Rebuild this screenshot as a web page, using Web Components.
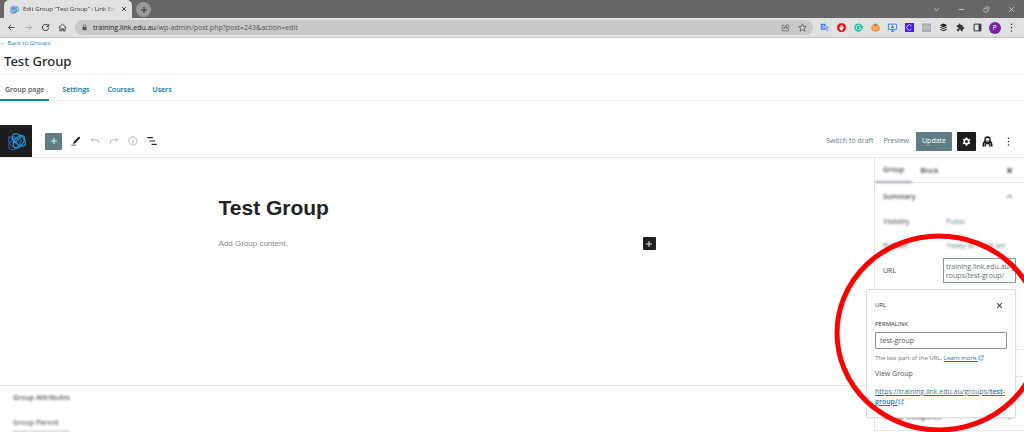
<!DOCTYPE html>
<html lang="en">
<head>
<meta charset="utf-8">
<title>Edit Group "Test Group"</title>
<style>
  body {
    margin: 0;
    background: #fff;
    color: #1e1e1e;
    font: 7px/10px "Open Sans", "Noto Sans", sans-serif;
  }
</style>
</head>
<body>
<group-page></group-page>

<script>
(function () {

  const icons = {
    back: '<path d="M20 12H4m7-7-7 7 7 7" fill="none" stroke="currentColor" stroke-width="2.4"/>',
    forward: '<path d="M4 12h16m-7-7 7 7-7 7" fill="none" stroke="currentColor" stroke-width="2"/>',
    reload: '<path d="M19 7a8.500 8.500 0 1 0 1.500 6M20.500 3v6h-6" fill="none" stroke="currentColor" stroke-width="2.6"/>',
    home: '<path d="M2 12 12 3l10 9M5 10v11h5v-6h4v6h5V10" fill="none" stroke="currentColor" stroke-width="2.4"/>',
    lock: '<path d="M5 10h14v11H5z" fill="currentColor"/><path d="M8 10V6a4 4 0 0 1 8 0v4" fill="none" stroke="currentColor" stroke-width="2.4"/>',
    share: '<path d="M9 6H3v15h17v-5M7 16c1-6 5-8 9-8V3l6 7-6 6v-5c-4 0-7 1-9 5z" fill="none" stroke="currentColor" stroke-width="1.8"/>',
    star: '<path d="m12 2 3 7 7 .6-5.500 4.800L18.500 22 12 18l-6.500 4 2-7.600L2 9.600 9 9z" fill="none" stroke="currentColor" stroke-width="2"/>',
    close: '<path d="m4 4 16 16M20 4 4 20" fill="none" stroke="currentColor" stroke-width="3.6"/>',
    thinclose: '<path d="m4 4 16 16M20 4 4 20" fill="none" stroke="currentColor" stroke-width="2.4"/>',
    plus: '<path d="M12 3v18M3 12h18" fill="none" stroke="currentColor" stroke-width="2.6"/>',
    down: '<path d="m4 8 8 8 8-8" fill="none" stroke="currentColor" stroke-width="2.4"/>',
    up: '<path d="m3 16 9-8 9 8" fill="none" stroke="currentColor" stroke-width="3.4"/>',
    minimize: '<path d="M3 12h18" stroke="currentColor" stroke-width="2.4"/>',
    restore: '<rect x="3" y="8" width="13" height="13" rx="3" fill="none" stroke="currentColor" stroke-width="2"/><path d="M8 5q0-2 3-2h6q4 0 4 4v6q0 3-2 3" fill="none" stroke="currentColor" stroke-width="2"/>',
    dots: '<g fill="currentColor"><circle cx="12" cy="3" r="2"/><circle cx="12" cy="12" r="2"/><circle cx="12" cy="21" r="2"/></g>',
    translate: '<path d="M2 2h12l4 16H4a2 2 0 0 1-2-2z" fill="#3f7de8"/><path d="M12 7h9a2 2 0 0 1 2 2v14h-8z" fill="#b9c9e8"/><path d="M11 8a3.500 3.500 0 1 0 .8 3H9" fill="none" stroke="#fff" stroke-width="1.700"/><path d="M14 12h7m-3.500-2v2m2.500 0c-1 3-3 5-5 6m1-4 5 5" fill="none" stroke="#557ac0" stroke-width="1.400"/>',
    blocker: '<path d="M7 1h10l6 6v10l-6 6H7l-6-6V7z" fill="#e40d0d" stroke="#e40d0d"/><path d="M9 13V8m2.500 5V6M14 13V7m-5 6h5l2-3q1-1 1 0l-1.500 6q-1 3-3.500 3c-3 0-4-2-4-6z" fill="#fff" stroke="#fff" stroke-width="1.800" stroke-linecap="round"/>',
    grammar: '<circle cx="12" cy="12" r="11" fill="#15c39a"/><path d="M16.500 8a6 6 0 1 0 1.500 5h-5m5 0v4" fill="none" stroke="#fff" stroke-width="2.200"/>',
    pineapple: '<path d="m12 8-8-4 5 0 3-4 3 4 5 0z" fill="#4b9b35"/><ellipse cx="12" cy="14" rx="11" ry="8.500" fill="#f57c19"/><path d="M10 10H5v4h5v4H4m9-8v8h2q4 0 4-4t-4-4z" fill="none" stroke="#ffe6b8" stroke-width="1.800"/>',
    screen: '<path d="M1 3h22v14H1z" fill="#dcecff" stroke="#2d7bf0" stroke-width="2.400"/><path d="M8 22h8m-4-5v5" stroke="#2d7bf0" stroke-width="3"/><path d="M8 13a4 4 0 0 1 8 0z" fill="#2d5ed1"/><circle cx="12" cy="8" r="2.500" fill="#e35b4f"/>',
    clip: '<path d="M0 0h24v24H0z" fill="#4a1cf1"/><path d="M17.500 8a7 7 0 1 0 0 8" fill="none" stroke="#d7ccff" stroke-width="2.400"/>',
    code: '<path d="M0 1h24v23H0z" fill="#a9afb8"/><path d="m8 8-4 4 4 4m8-8 4 4-4 4m-2-10-4 12" fill="none" stroke="#e9ecef" stroke-width="1.800"/>',
    buffer: '<g fill="#1b1b1b"><path d="m12 1 10 5-10 5L2 6z"/><path d="m2 11 3-1 7 3 7-3 3 1-10 5z"/><path d="m2 17 3-1 7 3 7-3 3 1-10 5z"/></g>',
    puzzle: '<path d="M20 11h-2V7q0-2-2-2h-4V4a2.500 2.500 0 0 0-5 0v1H4Q2 5 2 7v4h2a2.500 2.500 0 0 1 0 6H2v3q0 2 2 2h4v-2a2.500 2.500 0 0 1 5 0v2h3q2 0 2-2v-4h2a2.500 2.500 0 0 0 0-5z" fill="#333"/>',
    panel: '<path d="M3 3h18v18H3z" fill="none" stroke="#333" stroke-width="2.600"/><path d="M15 3h6v18h-6z" fill="#333"/>',
    knot: '<g fill="none" stroke-width="1.400"><g stroke="#2a5db4"><ellipse cx="9" cy="13" rx="5.500" ry="9" transform="rotate(-42 9 13)"/><ellipse cx="10" cy="15" rx="6" ry="9" transform="rotate(50 10 15)"/><path d="M4 8q8 1 12 13"/></g><g stroke="#18a0dc"><ellipse cx="15" cy="10" rx="5.500" ry="10" transform="rotate(-48 15 10)"/><ellipse cx="15" cy="12" rx="5.500" ry="9" transform="rotate(42 15 12)"/><path d="M7 14Q13 12 18 5"/></g></g>',
    pencil: '<path d="M20 2q4 1 1 4L11 17l-6 2 2-6L17 3q1-1 3-1z" fill="currentColor"/><path d="M1 22h11" stroke="#777" stroke-width="3"/>',
    undo: '<path d="M8 4 3 9l5 5M3 9h12q6 0 6 6v3" fill="none" stroke="currentColor" stroke-width="2"/>',
    redo: '<path d="m16 4 5 5-5 5m5-5H9q-6 0-6 6v3" fill="none" stroke="currentColor" stroke-width="2"/>',
    info: '<circle cx="12" cy="12" r="10" fill="none" stroke="currentColor" stroke-width="2"/><path d="M12 10v8m0-12v2" stroke="currentColor" stroke-width="2"/>',
    list: '<path d="M1 4h13M6 12h13M11 20h12" stroke="currentColor" stroke-width="2.800"/>',
    gear: '<path d="m10 1-.6 3-2.500 1.400L4 4.400l-2 3.400 2.300 2v4.400l-2.300 2 2 3.400 2.900-1L9.400 20l.6 3h4l.6-3 2.500-1.400 2.900 1 2-3.400-2.300-2V9.800l2.300-2-2-3.400-2.900 1L14.600 4 14 1z" fill="currentColor"/><circle cx="12" cy="12" r="4" fill="#1e1e1e"/>',
    astronaut: '<path d="M5 11V8a7 7.500 0 0 1 14 0v3q4 2 4 12H1Q1 13 5 11z" fill="#151515"/><path d="M8 6q4-3 8 0v3q-4 3-8 0z" fill="#fff"/><path d="M9 12q3 2 6 0M6 15v8m12-8v8" stroke="#fff" stroke-width="1.400" fill="none"/><path d="M9 18h6v6H9z" fill="#fff"/>',
    external: '<path d="M11 4H4v16h15v-7M11 14 21 3m-7 0h7v7" fill="none" stroke="currentColor" stroke-width="2.400"/>'
  }

  // attaches an open shadow root filled from a template
  class BaseElement extends HTMLElement {
    constructor () {
      super()
      const template = document.createElement('template')
      template.innerHTML = this.markup()
      this.attachShadow({mode: 'open'})
      this.shadowRoot.appendChild(template.content.cloneNode(true))
    }
  }

  // <ui-icon name="gear"></ui-icon>, size comes from --size
  class UiIcon extends BaseElement {
    markup () {
      return `
        <style>
          :host { display: inline-flex; flex: none; width: var(--size, 9px); height: var(--size, 9px); vertical-align: middle; }
          svg { width: 100%; height: 100%; overflow: visible; }
        </style>
        <svg viewBox="0 0 24 24" aria-hidden="true"></svg>
      `
    }

    connectedCallback () {
      this.shadowRoot.querySelector('svg').innerHTML = icons[this.getAttribute('name')] || ''
    }
  }

  // square button around an icon
  class IconButton extends BaseElement {
    markup () {
      return `
        <style>
          :host { display: flex; flex: none; }
          button {
            display: flex; align-items: center; justify-content: center;
            width: var(--button-width, 17px); height: var(--button-height, 17px);
            border: 0; border-radius: 1px; padding: 0;
            background: var(--button-bg, none); color: inherit; font: inherit;
          }
        </style>
        <button type="button"><slot></slot></button>
      `
    }

    connectedCallback () {
      this.shadowRoot.querySelector('button').setAttribute('aria-label', this.getAttribute('label'))
    }
  }

  class BrowserBar extends BaseElement {
    markup () {
      const extensions = ['translate', 'blocker', 'grammar', 'pineapple', 'screen', 'clip', 'code', 'buffer', 'puzzle', 'panel']
      return `
        <style>
          :host { display: block; }
          .strip { display: flex; align-items: flex-end; height: 18px; background: #666; color: #e8e8e8; }
          .tab {
            display: flex; align-items: center; gap: 4px; box-sizing: border-box;
            width: 128px; height: 18px; margin-left: 4px; padding: 0 4px 0 6px;
            border-radius: 5px 5px 0 0; background: #e1e1e1; color: #333;
          }
          .tab span {
            flex: 1; font-size: 6px; white-space: nowrap;
            -webkit-mask-image: linear-gradient(90deg, #000 88%, transparent);
          }
          .tab icon-button { --button-width: 8px; --size: 6px; }
          .new {
            --button-width: 15px; --button-height: 15px; --size: 8px;
            margin: 0 0 1px 4px; border-radius: 8px; background: #999; color: #222;
          }
          .window { display: flex; margin-left: auto; --button-width: 25px; --size: 7px; }
          .bar {
            display: flex; align-items: center; height: 19px; padding: 0 4px 0 3px;
            border-bottom: 1px solid #c4c4c4; background: #e1e1e1; color: #333;
          }
          .dim { color: #999; }
          .address {
            display: flex; flex: 1; align-items: center; height: 15px; margin: 0 3px 0 4px;
            padding: 0 2px 0 6px; border-radius: 8px; background: #c8c8c8; color: #555;
          }
          .address p { flex: 1; margin: 0 0 0 5px; white-space: nowrap; }
          .address b { color: #222; font-weight: 400; }
          .address > ui-icon { --size: 7px; }
          .avatar {
            display: flex; align-items: center; justify-content: center;
            width: 12px; height: 12px; border-radius: 6px; background: #7a1fa2; color: #fff;
          }
        </style>
        <div class="strip">
          <div class="tab">
            <ui-icon name="knot"></ui-icon>
            <span>Edit Group “Test Group” ‹ Link Ed</span>
            <icon-button label="Close tab"><ui-icon name="close"></ui-icon></icon-button>
          </div>
          <icon-button class="new" label="New tab"><ui-icon name="plus"></ui-icon></icon-button>
          <div class="window">
            <icon-button label="Search tabs"><ui-icon name="down"></ui-icon></icon-button>
            <icon-button label="Minimise"><ui-icon name="minimize"></ui-icon></icon-button>
            <icon-button label="Restore"><ui-icon name="restore"></ui-icon></icon-button>
            <icon-button label="Close window"><ui-icon name="thinclose"></ui-icon></icon-button>
          </div>
        </div>
        <div class="bar">
          <icon-button label="Back"><ui-icon name="back"></ui-icon></icon-button>
          <icon-button class="dim" label="Forward"><ui-icon name="forward"></ui-icon></icon-button>
          <icon-button label="Reload"><ui-icon name="reload"></ui-icon></icon-button>
          <icon-button label="Home"><ui-icon name="home"></ui-icon></icon-button>
          <div class="address">
            <ui-icon name="lock"></ui-icon>
            <p><b>training.link.edu.au</b>/wp-admin/post.php?post=243&amp;action=edit</p>
            <icon-button label="Share"><ui-icon name="share"></ui-icon></icon-button>
            <icon-button label="Bookmark"><ui-icon name="star"></ui-icon></icon-button>
          </div>
          ${extensions.map(name => `<icon-button label="${name}"><ui-icon name="${name}"></ui-icon></icon-button>`).join('')}
          <icon-button label="Profile"><span class="avatar">P</span></icon-button>
          <icon-button label="Menu"><ui-icon name="dots"></ui-icon></icon-button>
        </div>
      `
    }
  }

  class GroupHeader extends BaseElement {
    markup () {
      return `
        <style>
          :host { display: block; margin-bottom: 24px; }
          a { color: #0073aa; text-decoration: none; }
          .back { display: block; height: 10px; color: #2b82b5; font-size: 6px; }
          h1 { margin: 0; padding: 4px; border-bottom: 1px solid #eee; color: #23282d; font: 500 13px/18px "Noto Sans", "Open Sans", sans-serif; }
          nav { display: flex; height: 25px; border-bottom: 1px solid #eee; }
          nav a { box-sizing: border-box; height: 26px; padding: 0 5px; margin-right: 8px; line-height: 30px; font-weight: 600; }
          nav a.active { border-bottom: 2px solid #0a85bd; color: #555; }
        </style>
        <a class="back" href="#">← Back to Groups</a>
        <h1>Test Group</h1>
        <nav>
          <a class="active" href="#">Group page</a>
          <a href="#">Settings</a>
          <a href="#">Courses</a>
          <a href="#">Users</a>
        </nav>
      `
    }
  }

  class EditorToolbar extends BaseElement {
    markup () {
      return `
        <style>
          :host { display: flex; align-items: center; height: 32px; border-bottom: 1px solid #e4e4e4; }
          .logo { display: flex; align-items: center; justify-content: center; width: 32px; height: 32px; margin-right: 13px; background: #1e1e1e; --size: 19px; }
          .add { --button-bg: #5f7d84; --size: 8px; margin-right: 4px; color: #fff; }
          .tool { --button-width: 19px; --size: 10px; }
          .off { color: #aaa; }
          .right { display: flex; align-items: center; margin-left: auto; padding-right: 5px; }
          .right > button { border: 0; padding: 0; background: none; color: #5f7d84; font: inherit; }
          .right > .preview { margin: 0 7px 0 10px; }
          .right > .update { height: 19px; padding: 0 6px; margin-right: 5px; border-radius: 1px; background: #5f7d84; color: #fff; }
          .gear { --button-width: 19px; --button-height: 19px; --button-bg: #1e1e1e; color: #fff; margin-right: 1px; }
          .right .tool { --button-width: 21px; --size: 11px; }
          .right .more { --size: 9px; }
        </style>
        <a class="logo" href="#" aria-label="View groups"><ui-icon name="knot"></ui-icon></a>
        <icon-button class="add" label="Add block"><ui-icon name="plus"></ui-icon></icon-button>
        <icon-button class="tool" label="Tools"><ui-icon name="pencil"></ui-icon></icon-button>
        <icon-button class="tool off" label="Undo"><ui-icon name="undo"></ui-icon></icon-button>
        <icon-button class="tool off" label="Redo"><ui-icon name="redo"></ui-icon></icon-button>
        <icon-button class="tool off" label="Details"><ui-icon name="info"></ui-icon></icon-button>
        <icon-button class="tool" label="List view"><ui-icon name="list"></ui-icon></icon-button>
        <div class="right">
          <button type="button">Switch to draft</button>
          <button type="button" class="preview">Preview</button>
          <button type="button" class="update">Update</button>
          <icon-button class="gear" label="Settings"><ui-icon name="gear"></ui-icon></icon-button>
          <icon-button class="tool" label="Astra settings"><ui-icon name="astronaut"></ui-icon></icon-button>
          <icon-button class="tool more" label="Options"><ui-icon name="dots"></ui-icon></icon-button>
        </div>
      `
    }
  }

  class EditorCanvas extends BaseElement {
    markup () {
      return `
        <style>
          :host { display: flex; flex-direction: column; }
          .content { height: 228px; border-bottom: 1px solid #e4e4e4; box-sizing: border-box; padding: 37px 25% 0; font-family: "Liberation Sans", sans-serif; }
          h2 { margin: 0 0 16px; color: #222; font-size: 21px; line-height: 26px; }
          .block { display: flex; align-items: center; justify-content: space-between; color: #888; font-size: 8px; }
          .block icon-button { --button-width: 13px; --button-height: 13px; --button-bg: #1e1e1e; --size: 8px; color: #fff; }
          .meta { padding: 7px 13px 0; color: #666; filter: blur(1px); }
          .meta h3 { margin: 0 0 15px; color: #555; font-size: 7px; font-weight: 600; line-height: 10px; }
          .meta label { display: block; font-weight: 600; }
          select { display: block; width: 56px; height: 14px; margin-top: 3px; border: 1px solid #aaa; background: #fff; font: inherit; appearance: none; }
        </style>
        <div class="content">
          <h2>Test Group</h2>
          <div class="block">
            <span>Add Group content.</span>
            <icon-button label="Add block"><ui-icon name="plus"></ui-icon></icon-button>
          </div>
        </div>
        <div class="meta">
          <h3>Group Attributes</h3>
          <label for="parent">Group Parent</label>
          <select id="parent"></select>
        </div>
      `
    }
  }

  class UrlPopover extends BaseElement {
    markup () {
      return `
        <style>
          :host {
            display: block; box-sizing: border-box; width: 150px; padding: 9px 8px 10px;
            border: 1px solid #ddd; border-radius: 1px; background: #fff; box-shadow: 0 1px 3px #0001;
          }
          header { display: flex; align-items: center; justify-content: space-between; height: 12px; margin-bottom: 8px; }
          h3 { margin: 0; color: #333; font-size: 6px; font-weight: 400; }
          header icon-button { --button-height: 12px; --button-width: 15px; --size: 7px; }
          label { display: block; color: #333; font-size: 6px; }
          input {
            display: block; box-sizing: border-box; width: 100%; height: 17px; margin: 3px 0 4px; padding: 0 4px;
            border: 1px solid #8c8f94; border-radius: 1px; color: #555; font: inherit;
          }
          p { margin: 0 0 6px; color: #555; }
          .help { color: #777; font-size: 6px; white-space: nowrap; }
          a { color: #187aa8; --size: 6px; }
          .link { margin: 8px 0 0; }
          .link b { font-weight: 600; }
        </style>
        <header>
          <h3>URL</h3>
          <icon-button label="Close"><ui-icon name="close"></ui-icon></icon-button>
        </header>
        <label for="slug">PERMALINK</label>
        <input id="slug" type="text" value="test-group">
        <p class="help">The last part of the URL. <a href="#">Learn more.<ui-icon name="external"></ui-icon></a></p>
        <p>View Group</p>
        <p class="link"><a href="#">https://training.link.edu.au/groups/<b>test-</b><br><b>group/</b><ui-icon name="external"></ui-icon></a></p>
      `
    }
  }

  class SettingsPanel extends BaseElement {
    markup () {
      return `
        <style>
          :host { display: block; position: relative; border-left: 1px solid #e4e4e4; color: #444; }
          .soft { filter: blur(1px); }
          button { border: 0; padding: 0; background: none; color: inherit; font: inherit; text-align: left; }
          .tabs { display: flex; height: 24px; border-bottom: 1px solid #e8e8e8; }
          .tabs button { height: 25px; padding: 0 8px; font-weight: 600; }
          .tabs .active { border-bottom: 2px solid #9badb1; }
          .tabs icon-button { margin-left: auto; --button-height: 25px; }
          .tabs icon-button, .title icon-button { padding-right: 6px; --size: 7px; color: #222; }
          .title { display: flex; align-items: center; justify-content: space-between; height: 27px; padding-left: 8px; font-weight: 600; }
          .row { display: grid; grid-template-columns: 60px 1fr; align-items: center; height: 24px; padding: 0 8px; }
          .row .value { padding-left: 3px; color: #5f7d84; }
          .row .url {
            box-sizing: border-box; height: 25px; padding: 0 0 0 2px; border: 1px solid #8399a0;
            color: #5c6f75; line-height: 9px; white-space: nowrap;
          }
          .url-row { height: 25px; }
          .section { border-top: 1px solid #e8e8e8; height: 26px; }
          .sections { margin-top: 66px; border-bottom: 1px solid #e8e8e8; }
          url-popover { position: absolute; right: 8px; top: 131px; }
          .ring { position: absolute; right: -21px; top: 75px; width: 212px; height: 200px; pointer-events: none; }
        </style>
        <div class="tabs">
          <button type="button" class="active soft">Group</button>
          <button type="button" class="soft">Block</button>
          <icon-button class="soft" label="Close settings"><ui-icon name="close"></ui-icon></icon-button>
        </div>
        <div class="title soft">Summary<icon-button label="Collapse"><ui-icon name="up"></ui-icon></icon-button></div>
        <div class="row soft"><span>Visibility</span><button type="button" class="value">Public</button></div>
        <div class="row soft"><span>Publish</span><button type="button" class="value">Today at 10:46 am</button></div>
        <div class="row url-row"><span>URL</span><button type="button" class="url">training.link.edu.au/g<br>roups/test-group/</button></div>
        <div class="sections">
          <div class="section"></div>
          <div class="section"></div>
          <div class="section title soft">Group Categories<icon-button label="Expand"><ui-icon name="down"></ui-icon></icon-button></div>
        </div>
        <url-popover></url-popover>
        <svg class="ring" viewBox="0 0 212 200" aria-hidden="true">
          <ellipse cx="106" cy="100" rx="102" ry="97" fill="none" stroke="#f00" stroke-width="5"/>
        </svg>
      `
    }
  }

  class GroupPage extends BaseElement {
    markup () {
      return `
        <style>
          :host { display: flex; flex-direction: column; height: 100vh; overflow: hidden; }
          browser-bar, group-header, editor-toolbar { flex: none; }
          main { display: grid; grid-template-columns: minmax(0, 1fr) 150px; flex: 1; min-height: 0; }
        </style>
        <browser-bar></browser-bar>
        <group-header></group-header>
        <editor-toolbar></editor-toolbar>
        <main>
          <editor-canvas></editor-canvas>
          <settings-panel></settings-panel>
        </main>
      `
    }
  }

  window.customElements.define('ui-icon', UiIcon)
  window.customElements.define('icon-button', IconButton)
  window.customElements.define('browser-bar', BrowserBar)
  window.customElements.define('group-header', GroupHeader)
  window.customElements.define('editor-toolbar', EditorToolbar)
  window.customElements.define('editor-canvas', EditorCanvas)
  window.customElements.define('url-popover', UrlPopover)
  window.customElements.define('settings-panel', SettingsPanel)
  window.customElements.define('group-page', GroupPage)
})()
</script>
</body>
</html>
